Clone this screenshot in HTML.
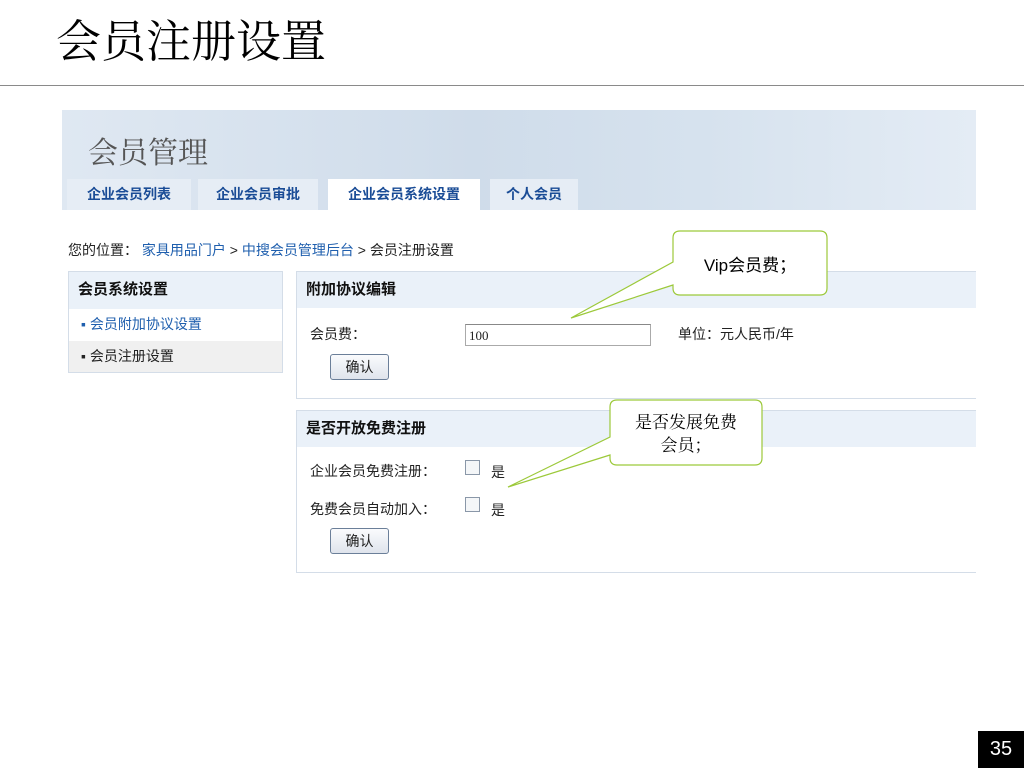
<!DOCTYPE html>
<html><head><meta charset="utf-8"><style>
*{margin:0;padding:0;box-sizing:border-box}
body{width:1024px;height:768px;position:relative;background:#fff;font-family:"Liberation Sans","Noto Sans CJK SC",sans-serif;overflow:hidden;color:#222}
.a{position:absolute}
.title{left:56px;top:14px;font-family:"Liberation Serif","Noto Serif CJK SC",serif;font-size:45px;color:#000;letter-spacing:0px;line-height:56px}
.hline{left:0;top:85px;width:1024px;height:1px;background:#8a8a8a}
.band{left:62px;top:110px;width:914px;height:100px;background:linear-gradient(90deg,#dfe8f2 0%,#cfdcea 45%,#d6e2ee 70%,#e4ecf5 100%)}
.hd{left:88px;top:128px;font-size:30px;color:#555;font-family:"Liberation Serif","Noto Serif CJK SC",serif}
.tab{top:179px;height:31px;background:#e6edf5;color:#1a4c96;font-weight:bold;font-size:14px;text-align:center;line-height:31px}
.tab.on{background:#fff}
.crumb{left:68px;top:241px;font-size:14px;line-height:18px}
.crumb b{font-weight:normal;color:#1f5fae}
.box{border:1px solid #d4dde8}
.ph{background:#eaf1f9;font-weight:bold;font-size:15px;padding-left:9px;line-height:36px;color:#111}
.fs{font-size:14px}
.btn{width:59px;height:26px;border:1px solid #6b7f99;border-radius:3px;background:linear-gradient(#fafbfd,#dfe4ec);font-size:14px;text-align:center;line-height:24px}
.cb{width:15px;height:15px;border:1px solid #8a97a8;background:#f4f6f8}
.num{left:978px;top:731px;width:46px;height:37px;background:#000;color:#fff;font-size:20px;text-align:center;line-height:37px}
</style></head><body>
<div class="a title">会员注册设置</div>
<div class="a hline"></div>
<div class="a band"></div>
<div class="a hd">会员管理</div>
<div class="a tab" style="left:67px;width:124px">企业会员列表</div>
<div class="a tab" style="left:198px;width:120px">企业会员审批</div>
<div class="a tab on" style="left:328px;width:152px">企业会员系统设置</div>
<div class="a tab" style="left:490px;width:88px">个人会员</div>
<div class="a crumb">您的位置： <b>家具用品门户</b> &gt; <b>中搜会员管理后台</b> &gt; 会员注册设置</div>

<div class="a box" style="left:68px;top:271px;width:215px;height:102px">
 <div class="ph" style="height:37px">会员系统设置</div>
 <div class="fs" style="height:32px;line-height:30px;padding-left:12px;color:#1f5fae">▪ 会员附加协议设置</div>
 <div class="fs" style="height:31px;line-height:30px;padding-left:12px;background:#f0f0f0">▪ 会员注册设置</div>
</div>

<div class="a box" style="left:296px;top:271px;width:680px;height:128px;border-right:none">
 <div class="ph">附加协议编辑</div>
</div>
<div class="a fs" style="left:310px;top:324px">会员费：</div>
<div class="a" style="left:465px;top:324px;width:186px;height:22px;border:1px solid #aaa;border-top-color:#888;font-size:13px;padding-left:3px;line-height:22px;font-family:'Liberation Serif',serif">100</div>
<div class="a fs" style="left:678px;top:324px">单位：元人民币/年</div>
<div class="a btn" style="left:330px;top:354px">确认</div>

<div class="a box" style="left:296px;top:410px;width:680px;height:163px;border-right:none">
 <div class="ph">是否开放免费注册</div>
</div>
<div class="a fs" style="left:310px;top:461px">企业会员免费注册：</div>
<div class="a cb" style="left:465px;top:460px"></div>
<div class="a fs" style="left:491px;top:462px">是</div>
<div class="a fs" style="left:310px;top:499px">免费会员自动加入：</div>
<div class="a cb" style="left:465px;top:497px"></div>
<div class="a fs" style="left:491px;top:500px">是</div>
<div class="a btn" style="left:330px;top:528px">确认</div>

<svg class="a" style="left:0;top:0" width="1024" height="768">
 <path d="M680,231 H820 Q827,231 827,238 V288 Q827,295 820,295 H680 Q673,295 673,288 V285 L571,318 L673,262 V238 Q673,231 680,231 Z" fill="#fff" stroke="#9cc93a" stroke-width="1.2"/>
 <path d="M617,400 H755 Q762,400 762,407 V458 Q762,465 755,465 H617 Q610,465 610,458 V455 L508,487 L610,437 V407 Q610,400 617,400 Z" fill="#fff" stroke="#9cc93a" stroke-width="1.2"/>
 <text x="750" y="271" font-size="17" text-anchor="middle" font-family="Liberation Sans,Noto Sans CJK SC,sans-serif" fill="#000">Vip会员费；</text>
 <text x="686" y="428" font-size="17" text-anchor="middle" font-family="Liberation Serif,Noto Serif CJK SC,serif" fill="#000">是否发展免费</text>
 <text x="686" y="451" font-size="17" text-anchor="middle" font-family="Liberation Serif,Noto Serif CJK SC,serif" fill="#000">会员；</text>
</svg>
<div class="a num">35</div>
</body></html>
